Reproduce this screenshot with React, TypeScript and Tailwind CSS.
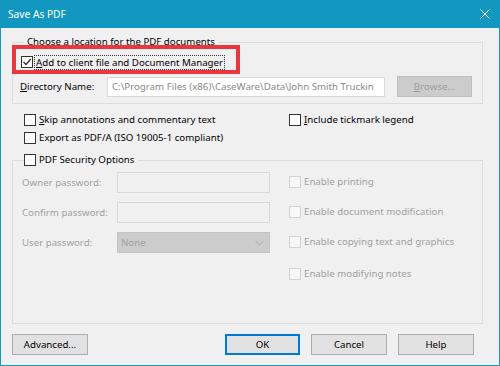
import React from "react";

function Box({ checked = false, disabled = false }: { checked?: boolean; disabled?: boolean }) {
  return (
    <span
      className={
        disabled
          ? "w-[12px] h-[12px] border border-[#d2d2d2] bg-[#f7f7f7] flex items-center justify-center shrink-0"
          : "w-[12px] h-[12px] border border-[#333333] bg-white flex items-center justify-center shrink-0"
      }
    >
      {checked && (
        <svg width="10" height="10" viewBox="0 0 10 10">
          <path d="M1.5 5 L4 7.5 L8.8 2" fill="none" stroke="#333333" strokeWidth="1.3" />
        </svg>
      )}
    </span>
  );
}

function Btn({ children, primary = false, disabled = false, w = "w-[75px]" }: { children: React.ReactNode; primary?: boolean; disabled?: boolean; w?: string }) {
  const cls = disabled
    ? "h-[21px] border border-[#bfbfbf] bg-[#cccccc] text-[#a0a0a0] flex items-center justify-center"
    : primary
    ? "h-[21px] border-2 border-[#0078d7] bg-[#e1e1e1] text-[#000] flex items-center justify-center"
    : "h-[21px] border border-[#adadad] bg-[#e1e1e1] text-[#000] flex items-center justify-center";
  return <div className={`${cls} ${w} shrink-0`}>{children}</div>;
}

export default function App() {
  return (
    <div className="w-[500px] h-[366px] bg-[#1298c0] flex flex-col font-['Noto_Sans',sans-serif] text-[9.7px] leading-[16px] text-[#000] whitespace-nowrap">
      {/* Title bar */}
      <div className="h-[28px] flex items-center justify-between pl-[8px] pr-[10px] text-white shrink-0">
        <span className="text-[10.2px]">Save As PDF</span>
        <svg width="10" height="10" viewBox="0 0 10 10">
          <path d="M0.5 0.5 L9.5 9.5 M9.5 0.5 L0.5 9.5" stroke="white" strokeWidth="1" />
        </svg>
      </div>
      {/* Body */}
      <div className="flex-1 mx-px mb-px bg-[#f0f0f0] pl-[11px] pt-[6px] flex flex-col">
        {/* Group 1 */}
        <fieldset className="w-[471px] border border-[#dcdcdc] pl-[7px] pb-[6px]">
          <legend className="ml-[4px] px-[3px] leading-[16px]">Choose a location for the PDF documents</legend>
          <div className="relative mt-[4px] h-[16px] flex items-center pl-[1px]">
            <div className="absolute left-[-8px] top-[-9px] w-[228px] h-[29px] border-[4px] border-[#ea373d]" />
            <Box checked />
            <span className="ml-[1px] px-[1px] border border-dotted border-[#333] leading-[13px]">
              <span className="underline">A</span>dd to client file and Document Manager
            </span>
          </div>
          <div className="mt-[6px] flex items-center">
            <span className="w-[87px] shrink-0">
              <span className="underline">D</span>irectory Name:
            </span>
            <div className="w-[278px] h-[20px] shrink-0 border border-[#d9d9d9] bg-white text-[#8a8a8a] pl-[4px] flex items-center overflow-hidden">
              C:\Program Files (x86)\CaseWare\Data\John Smith Truckin
            </div>
            <div className="ml-[12px]">
              <Btn disabled>
                <span>
                  <span className="underline">B</span>rowse...
                </span>
              </Btn>
            </div>
          </div>
        </fieldset>

        {/* Options */}
        <div className="flex mt-[8px] pl-[12px]">
          <div className="flex flex-col gap-[2px] w-[265px] shrink-0">
            <div className="h-[16px] flex items-center gap-[3px]">
              <Box />
              <span>
                <span className="underline">S</span>kip annotations and commentary text
              </span>
            </div>
            <div className="h-[16px] flex items-center gap-[3px]">
              <Box />
              <span>Export as PDF/A (ISO 19005-1 compliant)</span>
            </div>
          </div>
          <div className="h-[16px] flex items-center gap-[3px]">
            <Box />
            <span>
              <span className="underline">I</span>nclude tickmark legend
            </span>
          </div>
        </div>

        {/* Security group */}
        <fieldset className="mt-[6px] w-[471px] h-[172px] border border-[#dcdcdc] pb-[6px]">
          <legend className="ml-[11px] pr-[4px] flex items-center gap-[3px] leading-[16px]">
            <Box />
            <span>PDF Security Options</span>
          </legend>
          <div className="flex text-[#a0a0a0]">
            <div className="flex flex-col gap-[9px] pt-[4px] pl-[9px] w-[276px] shrink-0">
              <div className="flex items-center">
                <span className="w-[95px] shrink-0">Owner password:</span>
                <div className="w-[153px] h-[21px] border border-[#d9d9d9] bg-[#f0f0f0]" />
              </div>
              <div className="flex items-center">
                <span className="w-[95px] shrink-0">Confirm password:</span>
                <div className="w-[153px] h-[21px] border border-[#d9d9d9] bg-[#f0f0f0]" />
              </div>
              <div className="flex items-center">
                <span className="w-[95px] shrink-0">User password:</span>
                <div className="w-[153px] h-[21px] border border-[#c4c4c4] bg-[#cccccc] flex items-center justify-between pl-[3px] pr-[5px] text-[#a0a0a0]">
                  <span>None</span>
                  <svg width="9" height="6" viewBox="0 0 9 6">
                    <path d="M0.5 0.8 L4.5 4.8 L8.5 0.8" fill="none" stroke="#a8a8a8" strokeWidth="1" />
                  </svg>
                </div>
              </div>
            </div>
            <div className="flex flex-col pt-[6px]">
              <div className="h-[16px] flex items-center gap-[3px]">
                <Box disabled />
                <span>Enable printing</span>
              </div>
              <div className="mt-[14px] h-[16px] flex items-center gap-[3px]">
                <Box disabled />
                <span>Enable document modification</span>
              </div>
              <div className="mt-[14px] h-[16px] flex items-center gap-[3px]">
                <Box disabled />
                <span>Enable copying text and graphics</span>
              </div>
              <div className="mt-[16px] h-[16px] flex items-center gap-[3px]">
                <Box disabled />
                <span>Enable modifying notes</span>
              </div>
            </div>
          </div>
        </fieldset>

        {/* Buttons */}
        <div className="mt-[10px] w-[462px] flex justify-between">
          <Btn w="w-[76px]">Advanced...</Btn>
          <div className="flex gap-[11px]">
            <Btn primary>OK</Btn>
            <Btn w="w-[76px]">Cancel</Btn>
            <Btn w="w-[76px]">Help</Btn>
          </div>
        </div>
      </div>
    </div>
  );
}
